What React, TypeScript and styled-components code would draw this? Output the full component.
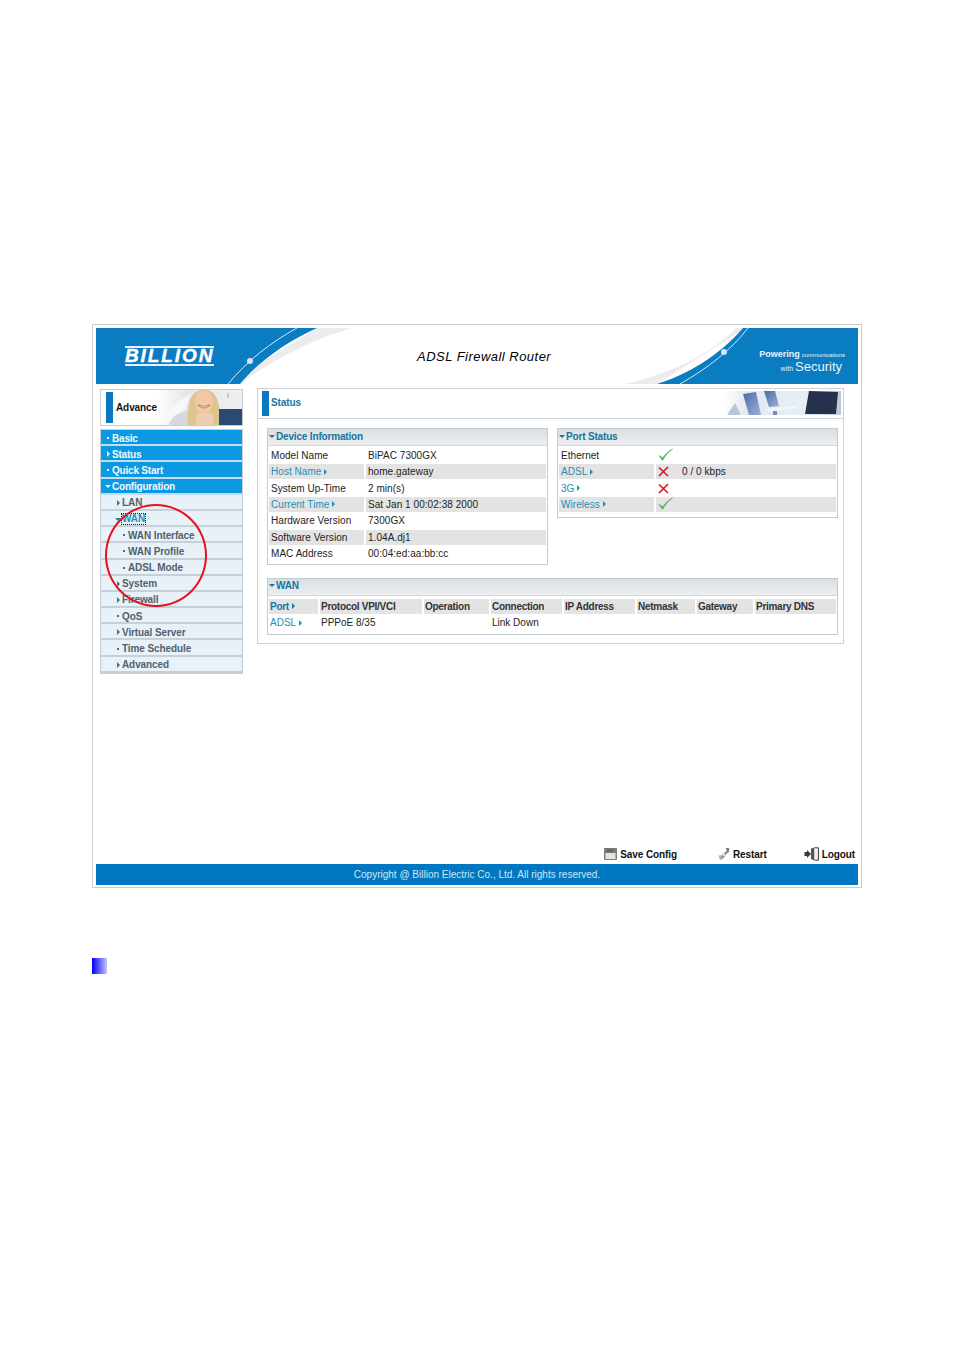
import React from "react";
import styled, { createGlobalStyle } from "styled-components";

const Global = createGlobalStyle`
  html, body { margin: 0; padding: 0; background: #fff; }
  body { font-family: "Liberation Sans", Arial, sans-serif; font-size: 10px; color: #222; }
`;

const Page = styled.div`
  box-sizing: border-box;
  width: 954px;
  height: 1350px;
  padding: 324px 0 0 92px;
`;

const Frame = styled.div`
  box-sizing: border-box;
  width: 770px;
  height: 564px;
  border: 1px solid #c9cdd0;
  padding: 3px 3px 2px;
  display: flex;
  flex-direction: column;
`;

const Banner = styled.header`
  position: relative;
  height: 56px;
  flex: none;
  display: flex;
  align-items: center;
`;

const BannerArt = styled.svg`
  position: absolute;
  inset: 0;
`;

const Logo = styled.div`
  position: relative;
  margin-left: 29px;
  width: 89px;
  border-top: 2px solid #e4f1fa;
  border-bottom: 2px solid #e4f1fa;
  color: #fff;
  font-size: 19px;
  line-height: 16px;
  font-weight: 700;
  font-style: italic;
  letter-spacing: 1.9px;
  -webkit-text-stroke: 0.4px #fff;
  white-space: nowrap;
`;

const Title = styled.h1`
  position: relative;
  margin: 0 0 0 203px;
  font-size: 13px;
  font-weight: 400;
  font-style: italic;
  letter-spacing: 0.47px;
  color: #000;
  white-space: nowrap;
`;

const Slogan = styled.div`
  position: relative;
  margin-left: auto;
  padding: 10px 13px 0 0;
  color: #e8f4fb;
  text-align: right;
  line-height: 9px;
  white-space: nowrap;
`;

const SloganStrong = styled.strong`
  font-size: 9px;
`;

const SloganSmall = styled.span`
  font-size: 6px;
  margin-left: 2px;
`;

const SloganWith = styled.span`
  font-size: 7px;
  margin-right: 2px;
`;

const SloganBig = styled.span`
  font-size: 13px;
  line-height: 13px;
  margin-right: 3px;
`;

const Body = styled.div`
  flex: 1;
  display: flex;
  gap: 14px;
  padding: 4px 0 0 4px;
`;

const Side = styled.aside`
  position: relative;
  width: 143px;
  padding-top: 1px;
`;

const AdvanceBox = styled.div`
  box-sizing: border-box;
  height: 37px;
  border: 1px solid #c8ccd0;
  padding: 0 0 0 5px;
  display: flex;
  align-items: stretch;
  overflow: hidden;
  background: #fff;
`;

const BlueBar = styled.span`
  width: 7px;
  background: #0b78bf;
  flex: none;
`;

const AdvanceBar = styled(BlueBar)`
  margin: 2px 0;
`;

const AdvanceLabel = styled.b`
  margin-left: 3px;
  align-self: center;
  font-size: 10px;
  letter-spacing: -0.1px;
  color: #111;
  width: 41px;
  flex: none;
`;

const MenuBox = styled.nav`
  box-sizing: border-box;
  margin-top: 3px;
  height: 245px;
  border: 1px solid #c3ced8;
  background: #e8f1f8;
`;

const MenuRow = styled.div<{ $top?: boolean; $level: number }>`
  box-sizing: border-box;
  height: 16.2px;
  display: flex;
  align-items: center;
  padding-top: 2px;
  padding-left: ${(p) => (p.$level === 0 ? 4 : p.$level === 1 ? 14 : 20)}px;
  background: ${(p) => (p.$top ? "#0a99e2" : "#e8f1f8")};
  border-bottom: 2px solid ${(p) => (p.$top ? "#c4dcec" : "#c6d0d9")};
  color: ${(p) => (p.$top ? "#f2f9fd" : "#55606a")};
  font-weight: 700;
  font-size: 10px;
  letter-spacing: ${(p) => (p.$top ? -0.2 : -0.1)}px;
  white-space: nowrap;
`;

const MarkerBox = styled.span`
  width: 6px;
  flex: none;
  margin-right: 1px;
  display: flex;
  justify-content: center;
  align-items: center;
`;

const Caret = styled.i<{ $down?: boolean; $color: string }>`
  width: 0;
  height: 0;
  ${(p) =>
    p.$down
      ? `border-left: 3px solid transparent; border-right: 3px solid transparent; border-top: 3px solid ${p.$color};`
      : `border-top: 3px solid transparent; border-bottom: 3px solid transparent; border-left: 3px solid ${p.$color};`}
`;

const Dot = styled.i<{ $color: string }>`
  width: 2px;
  height: 2px;
  background: ${(p) => p.$color};
`;

const ActiveItem = styled.span`
  color: #1f8fb8;
  outline: 1px dotted #123;
  outline-offset: 0;
  line-height: 10px;
`;

const RedCircle = styled.div`
  position: absolute;
  left: 5px;
  top: 116px;
  width: 102px;
  height: 103px;
  box-sizing: border-box;
  border: 2px solid #e8101c;
  border-radius: 50%;
  pointer-events: none;
`;

const Main = styled.main`
  box-sizing: border-box;
  width: 587px;
  height: 256px;
  border: 1px solid #ccd2d6;
`;

const MainHead = styled.div`
  box-sizing: border-box;
  height: 30px;
  border-bottom: 1px solid #ccd2d6;
  padding: 2px 2px 2px 4px;
  display: flex;
  align-items: stretch;
`;

const MainTitle = styled.b`
  margin: 0 0 2px 2px;
  align-self: center;
  color: #1675a8;
  font-size: 10px;
  letter-spacing: -0.1px;
  flex: 1;
`;

const MainContent = styled.div`
  padding: 9px 0 0 9px;
`;

const TopPanels = styled.div`
  display: flex;
  align-items: flex-start;
  gap: 9px;
`;

const Panel = styled.section<{ $w: number }>`
  box-sizing: border-box;
  width: ${(p) => p.$w}px;
  border: 1px solid #c0cbd3;
`;

const PanelTitle = styled.h2`
  box-sizing: border-box;
  margin: 0 0 1px;
  height: 17px;
  display: flex;
  align-items: center;
  padding: 0 0 2px 1px;
  gap: 1px;
  font-size: 10px;
  font-weight: 700;
  letter-spacing: -0.17px;
  color: #12769f;
  background: linear-gradient(#dcdfe2, #eceef0);
  border-bottom: 1px solid #cfd9e0;
`;

const Rows = styled.div<{ $bottom: number }>`
  padding: 0 1px ${(p) => p.$bottom}px;
`;

const Row = styled.div<{ $label: number }>`
  height: 16.4px;
  display: grid;
  grid-template-columns: ${(p) => p.$label}px 1fr;
  gap: 2px;
`;

const Cell = styled.div<{ $shade?: boolean; $link?: boolean }>`
  box-sizing: border-box;
  height: 14.6px;
  display: flex;
  align-items: center;
  gap: 3px;
  padding-left: 2px;
  background: ${(p) => (p.$shade ? "#e3e3e3" : "transparent")};
  color: ${(p) => (p.$link ? "#1e8fb5" : "#222")};
  letter-spacing: 0.05px;
  white-space: nowrap;
  margin-top: 1px;
`;

const ValueText = styled.span`
  margin-left: 10px;
`;

const WanGrid = styled.div`
  padding: 2px 1px 2px;
`;

const WanRow = styled.div`
  height: 16.4px;
  display: grid;
  grid-template-columns: 49px 102px 65px 71px 71px 58px 56px 81px;
  gap: 2px;
`;

const WanHead = styled.div<{ $link?: boolean }>`
  box-sizing: border-box;
  height: 15px;
  display: flex;
  align-items: center;
  gap: 3px;
  padding-left: 1px;
  background: #e3e3e3;
  font-weight: 700;
  letter-spacing: -0.28px;
  color: ${(p) => (p.$link ? "#12769f" : "#333")};
  white-space: nowrap;
`;

const WanCell = styled.div<{ $link?: boolean }>`
  height: 15px;
  display: flex;
  align-items: center;
  gap: 3px;
  padding-left: 1px;
  color: ${(p) => (p.$link ? "#1e8fb5" : "#222")};
  white-space: nowrap;
`;

const WanPanel = styled(Panel)`
  margin-top: 13px;
`;

const Actions = styled.div`
  flex: none;
  height: 16px;
  display: flex;
  align-items: flex-start;
  justify-content: flex-end;
  padding-right: 3px;
`;

const Action = styled.a<{ $gap: number }>`
  display: flex;
  align-items: center;
  gap: 3px;
  margin-left: ${(p) => p.$gap}px;
  height: 12px;
  color: #111;
  font-weight: 700;
  font-size: 10px;
  letter-spacing: -0.1px;
  white-space: nowrap;
`;

const Footer = styled.footer`
  flex: none;
  height: 21px;
  background: #0078c1;
  color: #cfe5f3;
  display: flex;
  align-items: center;
  justify-content: center;
  font-size: 10px;
`;

const Square = styled.div`
  margin-top: 70px;
  width: 15px;
  height: 16px;
  background: linear-gradient(90deg, #0000ff, #c4c4ff);
`;

const Check = () => (
  <svg width="15" height="14" viewBox="0 0 15 14">
    <path d="M1 7.5 L4.5 12.5 C7 8 10 4 14.5 1 C10 3.5 7 6.5 4.8 9.8 Z" fill="#5cb85c" stroke="#3f9f3f" strokeWidth="0.5" />
  </svg>
);

const Cross = () => (
  <svg width="11" height="11" viewBox="0 0 11 11">
    <path d="M1 1.5 L10 10 M10 1 L1 10" stroke="#d0202a" strokeWidth="1.7" />
  </svg>
);

const Marker = ({ kind, color }: { kind: string; color: string }) => (
  <MarkerBox>
    {kind === "dot" ? <Dot $color={color} /> : <Caret $down={kind === "down"} $color={color} />}
  </MarkerBox>
);

const menu = [
  { t: "Basic", k: "dot", l: 0 },
  { t: "Status", k: "right", l: 0 },
  { t: "Quick Start", k: "dot", l: 0 },
  { t: "Configuration", k: "down", l: 0 },
  { t: "LAN", k: "right", l: 1 },
  { t: "WAN", k: "down", l: 1 },
  { t: "WAN Interface", k: "dot", l: 2 },
  { t: "WAN Profile", k: "dot", l: 2 },
  { t: "ADSL Mode", k: "dot", l: 2 },
  { t: "System", k: "right", l: 1 },
  { t: "Firewall", k: "right", l: 1 },
  { t: "QoS", k: "dot", l: 1 },
  { t: "Virtual Server", k: "right", l: 1 },
  { t: "Time Schedule", k: "dot", l: 1 },
  { t: "Advanced", k: "right", l: 1 },
];

const device = [
  ["Model Name", "BiPAC 7300GX", false],
  ["Host Name", "home.gateway", true],
  ["System Up-Time", "2 min(s)", false],
  ["Current Time", "Sat Jan 1 00:02:38 2000", true],
  ["Hardware Version", "7300GX", false],
  ["Software Version", "1.04A.dj1", false],
  ["MAC Address", "00:04:ed:aa:bb:cc", false],
] as const;

const wanHeads = ["Protocol VPI/VCI", "Operation", "Connection", "IP Address", "Netmask", "Gateway", "Primary DNS"];

const BannerDrawing = () => (
  <BannerArt width="762" height="56" viewBox="0 0 762 56">
    <path d="M221 0 H256 C215 12 175 32 145 56 H130 Z" fill="#ececec" />
    <path d="M0 0 H221 C190 14 162 34 144 56 H0 Z" fill="#0a7cc2" />
    <path d="M201 0 C175 14 150 34 132 56" fill="none" stroke="#d6e9f5" strokeWidth="1" />
    <circle cx="154" cy="33" r="3" fill="#d6e9f5" />
    <path d="M527 56 C575 47 620 22 640 0 H650 L561 56 Z" fill="#ececec" />
    <path d="M647 0 H762 V56 H561 C600 44 630 20 647 0 Z" fill="#0a7cc2" />
    <path d="M652 0 C635 22 612 40 584 56" fill="none" stroke="#d6e9f5" strokeWidth="1" />
    <circle cx="628" cy="24" r="3" fill="#d6e9f5" />
  </BannerArt>
);

const AdvanceDrawing = () => (
  <svg width="85" height="35" viewBox="0 0 85 35">
    <defs>
      <linearGradient id="advBg" x1="0" x2="1" y1="0" y2="0">
        <stop offset="0" stopColor="#fff" />
        <stop offset="0.35" stopColor="#e4e6e8" />
        <stop offset="1" stopColor="#eef0f2" />
      </linearGradient>
      <filter id="advBlur"><feGaussianBlur stdDeviation="0.6" /></filter>
    </defs>
    <rect width="85" height="35" fill="url(#advBg)" />
    <g filter="url(#advBlur)">
      <path d="M4 35 L20 12 L34 4 L22 35 Z" fill="#f6f7f8" />
      <path d="M12 35 C14 26 24 21 34 20 L58 22 C64 26 64 32 64 35 Z" fill="#d5d9dd" />
      <path d="M31 35 C30 18 31 0 47 0 C63 0 62 18 65 35 Z" fill="#dcc58e" />
      <ellipse cx="47" cy="12" rx="9" ry="11.5" fill="#f2c9a4" />
      <path d="M41 15 Q47 21 53 15 Q47 18 41 15 Z" fill="#fff" stroke="#9a4a3a" strokeWidth="0.6" />
      <path d="M40 23 L55 23 L57 35 L38 35 Z" fill="#eecdb0" />
      <rect x="62" y="19" width="23" height="16" fill="#2f4a70" />
      <rect x="70" y="3" width="2" height="5" fill="#c9ced2" />
    </g>
  </svg>
);

const StatusDrawing = () => (
  <svg width="118" height="24" viewBox="0 0 118 24">
    <defs>
      <linearGradient id="stBg" x1="0" x2="1" y1="0" y2="0">
        <stop offset="0" stopColor="#fff" />
        <stop offset="0.2" stopColor="#e3e9f2" />
        <stop offset="0.7" stopColor="#e8eef5" />
        <stop offset="1" stopColor="#bcc8d8" />
      </linearGradient>
      <linearGradient id="stChair" x1="0" x2="1" y1="0" y2="1">
        <stop offset="0" stopColor="#4a69a8" />
        <stop offset="1" stopColor="#9db1d6" />
      </linearGradient>
      <filter id="stBlur"><feGaussianBlur stdDeviation="0.5" /></filter>
    </defs>
    <rect width="118" height="24" fill="url(#stBg)" />
    <g filter="url(#stBlur)">
      <path d="M4 24 L12 12 L18 24 Z" fill="#b8c6da" />
      <path d="M20 3 L33 1 L38 24 L26 24 Z" fill="url(#stChair)" />
      <path d="M41 0 L52 0 L56 15 L46 16 Z" fill="url(#stChair)" />
      <path d="M42 18 L72 15 L74 17 L46 21 Z" fill="#f2f5f9" />
      <path d="M50 20 L50 24 L54 24 L54 20 Z" fill="#7a8db0" />
      <path d="M86 0 L115 1 L113 23 L82 23 Z" fill="#26304e" />
    </g>
  </svg>
);

const SaveIcon = () => (
  <svg width="13" height="12" viewBox="0 0 13 12">
    <rect x="0.5" y="0.5" width="12" height="11" fill="#7e7e7a" stroke="#555" strokeWidth="0.6" />
    <rect x="2.5" y="0.8" width="7" height="3.5" fill="#6a6a66" />
    <rect x="1.5" y="5" width="10" height="6" fill="#e4e4e0" />
  </svg>
);

const RestartIcon = () => (
  <svg width="12" height="13" viewBox="0 0 12 13">
    <path d="M1 10 L5 6.5 L7 8.5 L3 12 Z" fill="#8d9296" />
    <path d="M6 5 L10 1.5 L11.5 3.5 L8 6.5 Z" fill="#8d9296" />
    <path d="M7.5 0 L11.5 0.5 L10 3.5 Z" fill="#5c6064" />
    <path d="M0.5 7.5 L4 7 L2.5 11.5 Z" fill="#b0b4b8" />
    <circle cx="6" cy="7" r="1.6" fill="#e5e7e9" stroke="#777" strokeWidth="0.4" />
  </svg>
);

const LogoutIcon = () => (
  <svg width="15" height="14" viewBox="0 0 15 14">
    <path d="M0.5 5 H3 V3 L7 7 L3 11 V9 H0.5 Z" fill="#3a3a3a" />
    <path d="M7 1.5 L10.5 0.5 V13.5 L7 12 Z" fill="#555" />
    <path d="M10.5 0.8 H14.4 V13.2 H10.5" fill="#f4f4f4" stroke="#222" strokeWidth="0.9" />
  </svg>
);

export default function App() {
  return (
    <>
      <Global />
      <Page>
        <Frame>
          <Banner>
            <BannerDrawing />
            <Logo>BILLION</Logo>
            <Title>ADSL Firewall Router</Title>
            <Slogan>
              <SloganStrong>Powering</SloganStrong>
              <SloganSmall>communications</SloganSmall>
              <br />
              <SloganWith>with</SloganWith>
              <SloganBig>Security</SloganBig>
            </Slogan>
          </Banner>
          <Body>
            <Side>
              <AdvanceBox>
                <AdvanceBar />
                <AdvanceLabel>Advance</AdvanceLabel>
                <AdvanceDrawing />
              </AdvanceBox>
              <MenuBox>
                {menu.map((m, i) => {
                  const top = m.l === 0;
                  return (
                    <MenuRow key={m.t + i} $top={top} $level={m.l}>
                      <Marker kind={m.k} color={top ? "#e8f4fb" : "#1c7fa8"} />
                      {m.t === "WAN" && m.l === 1 ? <ActiveItem>{m.t}</ActiveItem> : m.t}
                    </MenuRow>
                  );
                })}
              </MenuBox>
              <RedCircle />
            </Side>
            <Main>
              <MainHead>
                <BlueBar />
                <MainTitle>Status</MainTitle>
                <StatusDrawing />
              </MainHead>
              <MainContent>
                <TopPanels>
                  <Panel $w={281}>
                    <PanelTitle>
                      <Caret $down $color="#12769f" />
                      Device Information
                    </PanelTitle>
                    <Rows $bottom={2}>
                      {device.map(([label, value, link], i) => (
                        <Row key={label} $label={95}>
                          <Cell $shade={i % 2 === 1} $link={link}>
                            {label}
                            {link && <Caret $color="#1e8fb5" />}
                          </Cell>
                          <Cell $shade={i % 2 === 1}>{value}</Cell>
                        </Row>
                      ))}
                    </Rows>
                  </Panel>
                  <Panel $w={281}>
                    <PanelTitle>
                      <Caret $down $color="#12769f" />
                      Port Status
                    </PanelTitle>
                    <Rows $bottom={4}>
                      <Row $label={95}>
                        <Cell>Ethernet</Cell>
                        <Cell><Check /></Cell>
                      </Row>
                      <Row $label={95}>
                        <Cell $shade $link>ADSL<Caret $color="#1e8fb5" /></Cell>
                        <Cell $shade>
                          <Cross />
                          <ValueText>0 / 0 kbps</ValueText>
                        </Cell>
                      </Row>
                      <Row $label={95}>
                        <Cell $link>3G<Caret $color="#1e8fb5" /></Cell>
                        <Cell><Cross /></Cell>
                      </Row>
                      <Row $label={95}>
                        <Cell $shade $link>Wireless<Caret $color="#1e8fb5" /></Cell>
                        <Cell $shade><Check /></Cell>
                      </Row>
                    </Rows>
                  </Panel>
                </TopPanels>
                <WanPanel $w={571}>
                  <PanelTitle>
                    <Caret $down $color="#12769f" />
                    WAN
                  </PanelTitle>
                  <WanGrid>
                    <WanRow>
                      <WanHead $link>Port<Caret $color="#12769f" /></WanHead>
                      {wanHeads.map((h) => <WanHead key={h}>{h}</WanHead>)}
                    </WanRow>
                    <WanRow>
                      <WanCell $link>ADSL<Caret $color="#1e8fb5" /></WanCell>
                      <WanCell>PPPoE 8/35</WanCell>
                      <WanCell />
                      <WanCell>Link Down</WanCell>
                      <WanCell />
                      <WanCell />
                      <WanCell />
                      <WanCell />
                    </WanRow>
                  </WanGrid>
                </WanPanel>
              </MainContent>
            </Main>
          </Body>
          <Actions>
            <Action $gap={0}><SaveIcon />Save Config</Action>
            <Action $gap={41}><RestartIcon />Restart</Action>
            <Action $gap={37}><LogoutIcon />Logout</Action>
          </Actions>
          <Footer>Copyright @ Billion Electric Co., Ltd. All rights reserved.</Footer>
        </Frame>
        <Square />
      </Page>
    </>
  );
}
